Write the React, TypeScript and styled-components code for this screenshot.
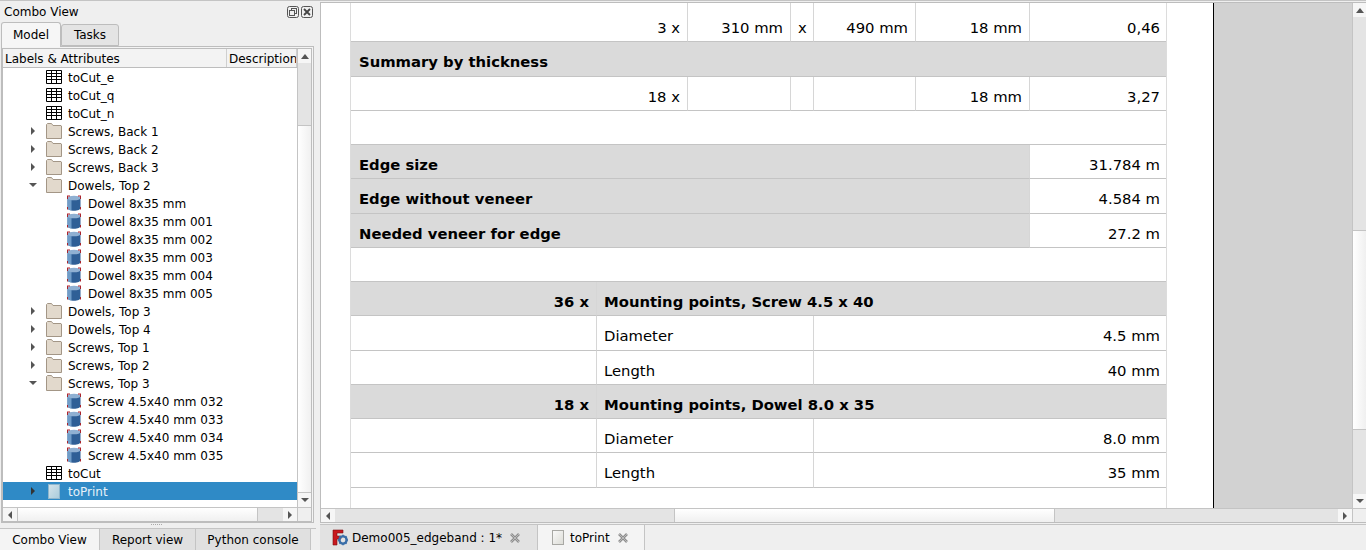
import React from 'react';
import styled, {createGlobalStyle} from 'styled-components';

const GlobalStyle = createGlobalStyle`
  html, body {
    margin: 0;
    padding: 0;
    background: #efefef;
  }
  body {
    font-family: "DejaVu Sans", sans-serif;
    color: #000;
  }
`;

const Window = styled.div`
  width: 1366px;
  height: 550px;
  overflow: hidden;
  display: flex;
  background: #efefef;
  border-top: 1px solid #c4c4c4;
  box-sizing: border-box;
`;

const Dock = styled.div`
  width: 316px;
  flex: none;
  display: flex;
  flex-direction: column;
`;

const DockTitle = styled.div`
  height: 21px;
  flex: none;
  display: flex;
  align-items: center;
  justify-content: space-between;
  box-sizing: border-box;
  padding: 0 3px 0 4px;
  font-size: 12px;
`;

const TitleButtons = styled.div`
  display: flex;
  gap: 2px;
`;

const TabRow = styled.div`
  height: 24px;
  flex: none;
  display: flex;
  align-items: flex-end;
  padding-left: 1px;
`;

const ModelTab = styled.div<{$active?: boolean}>`
  box-sizing: border-box;
  height: ${(p) => (p.$active ? 25 : 22)}px;
  width: ${(p) => (p.$active ? 60 : 58)}px;
  margin-bottom: ${(p) => (p.$active ? -1 : 0)}px;
  background: ${(p) => (p.$active ? '#f6f6f6' : '#e4e4e4')};
  border: 1px solid #bdbdbd;
  border-bottom: ${(p) => (p.$active ? 'none' : '1px solid #bdbdbd')};
  border-radius: 3px 3px 0 0;
  font-size: 12px;
  display: flex;
  align-items: center;
  justify-content: center;
  position: relative;
  z-index: ${(p) => (p.$active ? 1 : 0)};
`;

const TabPane = styled.div`
  margin: 0 2px 0 1px;
  height: 477px;
  flex: none;
  box-sizing: border-box;
  border: 1px solid #bdbdbd;
  padding: 1px 1px 0 0;
  background: #f4f4f4;
  display: flex;
`;

const TreeFrame = styled.div`
  flex: 1;
  min-width: 0;
  box-sizing: border-box;
  border: 1px solid #bdbdbd;
  background: #f4f4f4;
  display: grid;
  grid-template-columns: 1fr 14px;
  grid-template-rows: 1fr 14px;
`;

const TreeArea = styled.div`
  background: #fff;
  display: flex;
  flex-direction: column;
  min-width: 0;
  overflow: hidden;
`;

const TreeHeader = styled.div`
  height: 18px;
  flex: none;
  display: flex;
  font-size: 12px;
  background: #f3f3f3;
  border-bottom: 1px solid #bdbdbd;
  box-sizing: content-box;
`;

const HeaderCell = styled.div<{$w: number}>`
  width: ${(p) => p.$w}px;
  flex: none;
  box-sizing: border-box;
  padding-left: 2px;
  line-height: 20px;
  white-space: nowrap;
  overflow: hidden;
  border-right: 1px solid #cfcfcf;
`;

const TreeRow = styled.div<{$indent: number; $selected?: boolean}>`
  height: 18px;
  flex: none;
  display: flex;
  align-items: center;
  font-size: 12px;
  white-space: nowrap;
  background: ${(p) => (p.$selected ? '#2f8ac6' : 'transparent')};
  color: ${(p) => (p.$selected ? '#e6f1f8' : '#000')};
  padding-left: ${(p) => p.$indent}px;
`;

const RowLabel = styled.span`
  margin-top: 2px;
`;

const Arrow = styled.span`
  width: 13px;
  height: 18px;
  flex: none;
  margin-left: -20px;
  margin-right: 7px;
  display: flex;
  align-items: center;
  justify-content: center;
`;

const RowIcon = styled.span`
  width: 16px;
  height: 16px;
  flex: none;
  margin-right: 6px;
  display: flex;
  align-items: center;
  justify-content: center;
`;

const ScrollV = styled.div`
  display: flex;
  flex-direction: column;
  min-height: 0;
  background: #e4e4e4;
  border-left: 1px solid #c4c4c4;
`;

const ScrollH = styled.div`
  display: flex;
  min-width: 0;
  background: #e4e4e4;
  border-top: 1px solid #c4c4c4;
`;

const ScrollButton = styled.div<{$vertical?: boolean}>`
  flex: none;
  ${(p) => (p.$vertical ? 'height: 14px;' : 'width: 14px;')}
  background: #f6f6f6;
  display: flex;
  align-items: center;
  justify-content: center;
`;

const Thumb = styled.div<{$lead: number; $len: number; $vertical?: boolean}>`
  flex: none;
  box-sizing: border-box;
  ${(p) =>
    p.$vertical
      ? `height:${p.$len}px; margin-top:${p.$lead}px; border-top:1px solid #c4c4c4; border-bottom:1px solid #c4c4c4; background:linear-gradient(to right,#fff,#f0f0f0);`
      : `width:${p.$len}px; margin-left:${p.$lead}px; border-left:1px solid #c4c4c4; border-right:1px solid #c4c4c4; background:linear-gradient(to bottom,#fff,#f0f0f0);`}
`;

const Track = styled.div`
  flex: 1;
  min-width: 0;
  min-height: 0;
  display: flex;
`;

const VTrack = styled(Track)`
  flex-direction: column;
`;

const Corner = styled.div`
  background: #efefef;
  border-left: 1px solid #c4c4c4;
  border-top: 1px solid #c4c4c4;
`;

const Grip = styled.div`
  height: 5px;
  flex: none;
  display: flex;
  justify-content: center;
  gap: 1px;
  align-items: flex-start;
  padding-top: 1px;
  box-sizing: border-box;
  margin-right: 4px;
`;

const GripDot = styled.span`
  width: 1px;
  height: 1px;
  background: #aaa;
`;

const BottomTabs = styled.div`
  flex: 1;
  display: flex;
  border-top: 1px solid #c4c4c4;
`;

const BottomTab = styled.div<{$w: number; $active?: boolean}>`
  width: ${(p) => p.$w}px;
  flex: none;
  box-sizing: border-box;
  background: ${(p) => (p.$active ? '#f4f4f4' : '#e0e0e0')};
  border-right: 1px solid #c4c4c4;
  font-size: 12px;
  display: flex;
  align-items: center;
  justify-content: center;
`;

const Main = styled.div`
  flex: 1;
  min-width: 0;
  margin-left: 4px;
  display: flex;
  flex-direction: column;
`;

const Viewer = styled.div`
  height: 521px;
  flex: none;
  display: grid;
  grid-template-columns: 1fr 14px;
  grid-template-rows: 1fr 14px;
  margin-top: 1px;
  border-top: 1px solid #bdbdbd;
  border-left: 1px solid #bdbdbd;
  border-bottom: 1px solid #bdbdbd;
  box-sizing: border-box;
`;

const Canvas = styled.div`
  background: #d2d2d2;
  overflow: hidden;
  min-height: 0;
`;

const Page = styled.div`
  width: 893px;
  height: 100%;
  background: #fff;
  border-right: 1px solid #000;
  padding-left: 29px;
  box-sizing: border-box;
`;

const Sheet = styled.div`
  width: 817px;
  height: 100%;
  box-sizing: border-box;
  border-left: 1px solid #dcdcdc;
  border-right: 1px solid #dcdcdc;
  display: grid;
  grid-template-columns: 246px 91px 103px 23px 102px 114px 136px;
  grid-template-rows: 5px repeat(14, 34.25px);
  align-content: start;
  font-size: 14.8px;
`;

const Cell = styled.div<{
  $span?: number;
  $head?: boolean;
  $right?: boolean;
  $noLine?: boolean;
  $inset?: boolean;
}>`
  grid-column: span ${(p) => p.$span ?? 1};
  box-sizing: border-box;
  display: flex;
  align-items: center;
  justify-content: ${(p) => (p.$right ? 'flex-end' : 'flex-start')};
  padding: 6px ${(p) => (p.$noLine ? 6 : 7)}px 0 ${(p) => (p.$inset ? 8 : 7)}px;
  background: ${(p) => (p.$head ? '#dadada' : '#fff')};
  font-weight: ${(p) => (p.$head ? 700 : 400)};
  border-bottom: 1px solid #c4c4c4;
  border-right: ${(p) => (p.$noLine ? 'none' : '1px solid #d6d6d6')};
  white-space: nowrap;
`;

const DocTabs = styled.div`
  flex: 1;
  display: flex;
  margin-top: 1px;
  border-top: 1px solid #c4c4c4;
`;

const DocTab = styled.div<{$w: number; $active?: boolean}>`
  width: ${(p) => p.$w}px;
  flex: none;
  box-sizing: border-box;
  display: flex;
  align-items: center;
  padding-left: 12px;
  background: ${(p) => (p.$active ? '#f4f4f4' : '#e2e2e2')};
  border-right: 1px solid #c4c4c4;
  font-size: 12px;
`;

const TabIcon = styled.span`
  width: 16px;
  height: 17px;
  flex: none;
  display: flex;
  align-items: center;
  justify-content: center;
`;

const TabLabel = styled.span`
  margin-left: 4px;
  margin-right: 7px;
`;

const triangle = {
  up: '4,2 0,7 8,7',
  down: '0,2 8,2 4,6',
  left: '6,0 6,8 2,4',
  right: '2,0 2,8 6,4',
};

function Tri({dir, dark}: {dir: keyof typeof triangle; dark?: boolean}) {
  return (
    <svg width="8" height="8" viewBox="0 0 8 8">
      <polygon points={triangle[dir]} fill={dark ? '#333' : '#555'} />
    </svg>
  );
}

function TableIcon() {
  return (
    <svg width="16" height="14" viewBox="0 0 16 14">
      <path
        d="M.5.5h15v13H.5zM.5 3.5h15M.5 6.5h15M.5 9.5h15M5.5.5v13M10.5.5v13"
        fill="#fff"
        stroke="#000"
      />
    </svg>
  );
}

function FolderIcon() {
  return (
    <svg width="16" height="16" viewBox="0 0 16 16">
      <path
        d="M.5 15.5V1.5l1-1h4l1.5 2h8l.5.5v12.500z"
        fill="#e2d9cc"
        stroke="#a39686"
      />
    </svg>
  );
}

function DowelIcon() {
  return (
    <svg width="16" height="16" viewBox="0 0 16 16">
      <path d="M1.500 3v10c0 1.600 2.800 2.800 6.500 2.800s6.500-1.200 6.500-2.800V3z" fill="#2f5f96" />
      <path d="M1.500 3v10c0 1 1.400 1.900 4 2.400V3z" fill="#6f9cc8" />
      <ellipse cx="8" cy="3" rx="6.500" ry="2.300" fill="#8fb0d2" />
      <path d="M1 1h3M12 1h3" stroke="#b82028" strokeWidth="1" />
      <path d="M1.500 1v3M14.500 1v3M1.500 12v2.500M14.500 12v2.500" stroke="#a8242c" />
    </svg>
  );
}

function DocIcon({selected}: {selected?: boolean}) {
  const id = selected ? 'docS' : 'docN';
  return (
    <svg width="12" height="15" viewBox="0 0 12 15">
      <defs>
        <linearGradient id={id} x1="0" y1="0" x2="1" y2="1">
          <stop offset="0" stopColor={selected ? '#d6e4ea' : '#fafafa'} />
          <stop offset="1" stopColor={selected ? '#a9ccdc' : '#dcdcd6'} />
        </linearGradient>
      </defs>
      <rect
        x=".5"
        y=".5"
        width="11"
        height="14"
        fill={`url(#${id})`}
        stroke={selected ? '#8fb6cc' : '#a8a8a4'}
      />
    </svg>
  );
}

function FreeCadIcon() {
  return (
    <svg width="16" height="17" viewBox="0 0 16 17">
      <path d="M1 1h10v3H5v3h4v3H5v6H1z" fill="#c8181e" stroke="#7a0f12" strokeWidth=".6" />
      <circle cx="11" cy="11" r="3.600" fill="none" stroke="#3a6ea8" strokeWidth="2.400" />
      <path
        d="M11 5.800v2M11 14.200v2M5.800 11h2M14.200 11h2M7.400 7.400l1.300 1.300M13.300 13.300l1.300 1.300M14.600 7.400l-1.300 1.300M8.700 13.300l-1.300 1.300"
        stroke="#3a6ea8"
        strokeWidth="1.500"
      />
    </svg>
  );
}

function CloseX() {
  return (
    <svg width="12" height="12" viewBox="0 0 12 12">
      <path d="M2 2l8 8M10 2l-8 8" stroke="#8e8e8e" strokeWidth="2.600" />
      <path d="M2 2l8 8M10 2l-8 8" stroke="#c4c4c4" strokeWidth=".8" />
    </svg>
  );
}

function FloatButton() {
  return (
    <svg width="12" height="12" viewBox="0 0 12 12" fill="none" stroke="#555">
      <rect x=".5" y=".5" width="11" height="11" rx="2" />
      <rect x="4.500" y="2.500" width="5" height="5" />
      <rect x="2.500" y="4.500" width="5" height="5" fill="#efefef" />
    </svg>
  );
}

function DockClose() {
  return (
    <svg width="12" height="12" viewBox="0 0 12 12" fill="none">
      <rect x=".5" y=".5" width="11" height="11" rx="2" stroke="#555" />
      <path d="M3 3l6 6M9 3l-6 6" stroke="#444" strokeWidth="1.800" />
    </svg>
  );
}

type Node = {
  label: string;
  kind: 'table' | 'folder' | 'part' | 'doc';
  open?: boolean;
  selected?: boolean;
};

const nodes: Node[] = [
  {label: 'toCut_e', kind: 'table'},
  {label: 'toCut_q', kind: 'table'},
  {label: 'toCut_n', kind: 'table'},
  {label: 'Screws, Back 1', kind: 'folder'},
  {label: 'Screws, Back 2', kind: 'folder'},
  {label: 'Screws, Back 3', kind: 'folder'},
  {label: 'Dowels, Top 2', kind: 'folder', open: true},
  {label: 'Dowel 8x35 mm', kind: 'part'},
  {label: 'Dowel 8x35 mm 001', kind: 'part'},
  {label: 'Dowel 8x35 mm 002', kind: 'part'},
  {label: 'Dowel 8x35 mm 003', kind: 'part'},
  {label: 'Dowel 8x35 mm 004', kind: 'part'},
  {label: 'Dowel 8x35 mm 005', kind: 'part'},
  {label: 'Dowels, Top 3', kind: 'folder'},
  {label: 'Dowels, Top 4', kind: 'folder'},
  {label: 'Screws, Top 1', kind: 'folder'},
  {label: 'Screws, Top 2', kind: 'folder'},
  {label: 'Screws, Top 3', kind: 'folder', open: true},
  {label: 'Screw 4.5x40 mm 032', kind: 'part'},
  {label: 'Screw 4.5x40 mm 033', kind: 'part'},
  {label: 'Screw 4.5x40 mm 034', kind: 'part'},
  {label: 'Screw 4.5x40 mm 035', kind: 'part'},
  {label: 'toCut', kind: 'table'},
  {label: 'toPrint', kind: 'doc', selected: true},
];

function NodeRow({node}: {node: Node}) {
  const hasArrow = node.kind === 'folder' || node.kind === 'doc';
  return (
    <TreeRow $indent={node.kind === 'part' ? 63 : 43} $selected={node.selected}>
      {hasArrow && (
        <Arrow>
          <Tri dir={node.open ? 'down' : 'right'} dark={node.selected} />
        </Arrow>
      )}
      <RowIcon>
        {node.kind === 'table' && <TableIcon />}
        {node.kind === 'folder' && <FolderIcon />}
        {node.kind === 'part' && <DowelIcon />}
        {node.kind === 'doc' && <DocIcon selected />}
      </RowIcon>
      <RowLabel>{node.label}</RowLabel>
    </TreeRow>
  );
}

export default function App() {
  return (
    <>
      <GlobalStyle />
      <Window>
        <Dock>
          <DockTitle>
            Combo View
            <TitleButtons>
              <FloatButton />
              <DockClose />
            </TitleButtons>
          </DockTitle>
          <TabRow>
            <ModelTab $active>Model</ModelTab>
            <ModelTab>Tasks</ModelTab>
          </TabRow>
          <TabPane>
            <TreeFrame>
              <TreeArea>
                <TreeHeader>
                  <HeaderCell $w={224}>Labels &amp; Attributes</HeaderCell>
                  <HeaderCell $w={70}>Description</HeaderCell>
                </TreeHeader>
                {nodes.map((n) => (
                  <NodeRow key={n.label} node={n} />
                ))}
              </TreeArea>
              <ScrollV>
                <ScrollButton $vertical>
                  <Tri dir="up" />
                </ScrollButton>
                <VTrack>
                  <Thumb $vertical $lead={62} $len={368} />
                </VTrack>
                <ScrollButton $vertical>
                  <Tri dir="down" />
                </ScrollButton>
              </ScrollV>
              <ScrollH>
                <ScrollButton>
                  <Tri dir="left" />
                </ScrollButton>
                <Track>
                  <Thumb $lead={0} $len={241} />
                </Track>
                <ScrollButton>
                  <Tri dir="right" />
                </ScrollButton>
              </ScrollH>
              <Corner />
            </TreeFrame>
          </TabPane>
          <Grip>
            {[0, 1, 2, 3, 4, 5].map((i) => (
              <GripDot key={i} />
            ))}
          </Grip>
          <BottomTabs>
            <BottomTab $w={100} $active>
              Combo View
            </BottomTab>
            <BottomTab $w={96}>Report view</BottomTab>
            <BottomTab $w={115}>Python console</BottomTab>
          </BottomTabs>
        </Dock>
        <Main>
          <Viewer>
            <Canvas>
              <Page>
                <Sheet>
                  <Cell $span={2} />
                  <Cell />
                  <Cell />
                  <Cell />
                  <Cell />
                  <Cell $noLine />

                  <Cell $span={2} $right>3 x</Cell>
                  <Cell $right>310 mm</Cell>
                  <Cell>x</Cell>
                  <Cell $right>490 mm</Cell>
                  <Cell $right>18 mm</Cell>
                  <Cell $right $noLine>0,46</Cell>

                  <Cell $span={7} $head $noLine $inset>Summary by thickness</Cell>

                  <Cell $span={2} $right>18 x</Cell>
                  <Cell />
                  <Cell />
                  <Cell />
                  <Cell $right>18 mm</Cell>
                  <Cell $right $noLine>3,27</Cell>

                  <Cell $span={7} $noLine />

                  <Cell $span={6} $head $inset>Edge size</Cell>
                  <Cell $right $noLine>31.784 m</Cell>
                  <Cell $span={6} $head $inset>Edge without veneer</Cell>
                  <Cell $right $noLine>4.584 m</Cell>
                  <Cell $span={6} $head $inset>Needed veneer for edge</Cell>
                  <Cell $right $noLine>27.2 m</Cell>

                  <Cell $span={7} $noLine />

                  <Cell $head $right>36 x</Cell>
                  <Cell $span={6} $head $noLine>Mounting points, Screw 4.5 x 40</Cell>
                  <Cell />
                  <Cell $span={3}>Diameter</Cell>
                  <Cell $span={3} $right $noLine>4.5 mm</Cell>
                  <Cell />
                  <Cell $span={3}>Length</Cell>
                  <Cell $span={3} $right $noLine>40 mm</Cell>

                  <Cell $head $right>18 x</Cell>
                  <Cell $span={6} $head $noLine>Mounting points, Dowel 8.0 x 35</Cell>
                  <Cell />
                  <Cell $span={3}>Diameter</Cell>
                  <Cell $span={3} $right $noLine>8.0 mm</Cell>
                  <Cell />
                  <Cell $span={3}>Length</Cell>
                  <Cell $span={3} $right $noLine>35 mm</Cell>
                </Sheet>
              </Page>
            </Canvas>
            <ScrollV>
              <ScrollButton $vertical>
                <Tri dir="up" />
              </ScrollButton>
              <VTrack>
                <Thumb $vertical $lead={213} $len={200} />
              </VTrack>
              <ScrollButton $vertical>
                <Tri dir="down" />
              </ScrollButton>
            </ScrollV>
            <ScrollH>
              <ScrollButton>
                <Tri dir="left" />
              </ScrollButton>
              <Track>
                <Thumb $lead={339} $len={381} />
              </Track>
              <ScrollButton>
                <Tri dir="right" />
              </ScrollButton>
            </ScrollH>
            <Corner />
          </Viewer>
          <DocTabs>
            <DocTab $w={218}>
              <TabIcon>
                <FreeCadIcon />
              </TabIcon>
              <TabLabel>Demo005_edgeband : 1*</TabLabel>
              <CloseX />
            </DocTab>
            <DocTab $w={107} $active>
              <TabIcon>
                <DocIcon />
              </TabIcon>
              <TabLabel>toPrint</TabLabel>
              <CloseX />
            </DocTab>
          </DocTabs>
        </Main>
      </Window>
    </>
  );
}
